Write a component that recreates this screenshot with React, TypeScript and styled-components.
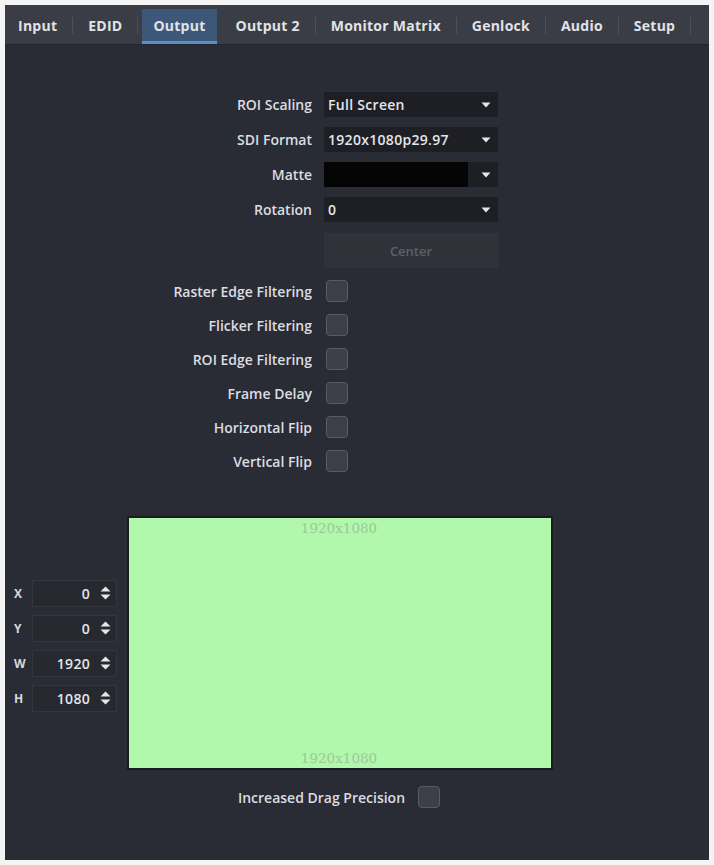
import React from "react";
import styled, { createGlobalStyle, css } from "styled-components";

const Global = createGlobalStyle`
  html, body { margin: 0; padding: 0; background: #f4f4f4; }
  body { font-family: "Open Sans", "Liberation Sans", sans-serif; }
  * { box-sizing: border-box; }
`;

const Frame = styled.div`
  width: 704px;
  height: 855px;
  margin: 5px 0 0 5px;
  background: #2a2c35;
  display: flex;
  flex-direction: column;
  overflow: hidden;
`;

const TabBar = styled.div`
  height: 40px;
  background: #3a3d46;
  display: flex;
  align-items: stretch;
  padding-left: 0;
  border-bottom: 1px solid #23252c;
  flex-shrink: 0;
`;

const Tab = styled.div<{ $active?: boolean; $first?: boolean }>`
  position: relative;
  display: flex;
  align-items: center;
  padding: 2px 15px 0 ${(p) => (p.$first ? "13px" : "15px")};
  font-size: 14px;
  letter-spacing: 0.25px;
  font-weight: 700;
  color: #e2e3e6;
  white-space: nowrap;
  ${(p) =>
    p.$active &&
    css`
      padding: 2px 11px 0;
      margin: 0 4px;
      &::before {
        content: "";
        position: absolute;
        left: 0;
        right: 0;
        top: 4px;
        bottom: 0;
        background: #3c5778;
        border-bottom: 3px solid #5b8fc7;
      }
    `}
  & > span { position: relative; }
`;

const Sep = styled.div`
  width: 1px;
  margin: 12px 0 10px;
  background: #4d5059;
`;

const Body = styled.div`
  flex: 1;
  display: flex;
  flex-direction: column;
  padding: 47px 0 0 7px;
`;

const Form = styled.div`
  display: grid;
  grid-template-columns: 300px 174px;
  column-gap: 12px;
  row-gap: 10px;
  align-items: center;
`;

const Label = styled.div`
  text-align: right;
  font-size: 14px;
  font-weight: 600;
  color: #dcdde0;
  white-space: nowrap;
`;

const Select = styled.div`
  height: 25px;
  background: #1e1f25;
  display: flex;
  align-items: center;
  padding-left: 4px;
  font-size: 14px;
  letter-spacing: 0.3px;
  font-weight: 600;
  color: #e4e5e8;
  position: relative;
`;

const SelectText = styled.span`
  flex: 1;
`;

const Caret = styled.span`
  width: 24px;
  display: flex;
  justify-content: center;
  align-items: center;
`;

const Swatch = styled.div`
  flex: 1;
  align-self: stretch;
  margin-left: -4px;
  background: #050505;
  margin-right: 6px;
`;

const CenterButton = styled.div`
  grid-column: 2;
  height: 35px;
  margin-top: 1px;
  background: #30323a;
  color: #5e6068;
  font-size: 13px;
  font-weight: 600;
  display: flex;
  align-items: center;
  justify-content: center;
`;

const Checks = styled.div`
  display: grid;
  grid-template-columns: 300px 22px;
  column-gap: 14px;
  row-gap: 12px;
  align-items: center;
  margin-top: 12px;
`;

const Box = styled.div`
  width: 22px;
  height: 22px;
  border-radius: 4px;
  background: #3d3f47;
  border: 1px solid #5a5c64;
`;

const CanvasSection = styled.div`
  display: grid;
  grid-template-columns: 105px 426px;
  justify-content: start;
  column-gap: 10px;
  align-items: center;
  margin-top: 44px;
`;

const Coords = styled.div`
  display: grid;
  grid-template-columns: 20px 85px;
  row-gap: 8px;
  align-items: center;
  margin-top: 5px;
`;

const CoordLabel = styled.div`
  font-size: 12px;
  font-weight: 700;
  color: #d8d9dc;
  padding-left: 2px;
`;

const NumInput = styled.div`
  height: 27px;
  background: #272930;
  border: 1px solid #34363e;
  display: flex;
  align-items: center;
  justify-content: flex-end;
  padding-right: 5px;
  font-size: 14px;
  letter-spacing: 0.3px;
  font-weight: 600;
  color: #e4e5e8;
  gap: 10px;
`;

const Canvas = styled.div`
  width: 426px;
  height: 254px;
  background: #b1f8ad;
  border: 2px solid #1b1c20;
  display: flex;
  flex-direction: column;
  justify-content: space-between;
  align-items: center;
  padding: 1px 0 1px;
`;

const CanvasText = styled.div`
  font-family: "DejaVu Serif", "Liberation Serif", serif;
  font-size: 13.5px;
  color: #9cc999;
  line-height: 18px;
  margin-left: -2px;
`;

const DragRow = styled.div`
  grid-column: 2;
  justify-self: center;
  display: flex;
  align-items: center;
  gap: 13px;
  margin-top: 16px;
  margin-left: -2px;
`;

const CaretIcon = () => (
  <svg width="10" height="6" viewBox="0 0 10 6">
    <path d="M0.5 0.5 L9.5 0.5 L5 5.5 Z" fill="#e6e6e8" />
  </svg>
);

const SpinIcon = () => (
  <svg width="11" height="14" viewBox="0 0 11 14">
    <path d="M5.5 0.5 L10.5 5.5 L0.5 5.5 Z" fill="#e6e6e8" />
    <path d="M5.5 13.5 L10.5 8.5 L0.5 8.5 Z" fill="#e6e6e8" />
  </svg>
);

const tabs = ["Input", "EDID", "Output", "Output 2", "Monitor Matrix", "Genlock", "Audio", "Setup"];
const checks = [
  "Raster Edge Filtering",
  "Flicker Filtering",
  "ROI Edge Filtering",
  "Frame Delay",
  "Horizontal Flip",
  "Vertical Flip",
];
const coords: [string, string][] = [
  ["X", "0"],
  ["Y", "0"],
  ["W", "1920"],
  ["H", "1080"],
];

export default function App() {
  return (
    <>
      <Global />
      <Frame>
        <TabBar>
          {tabs.map((t, i) => (
            <React.Fragment key={t}>
              <Tab $active={t === "Output"} $first={i === 0}>
                <span>{t}</span>
              </Tab>
              {t === "Output" ? null : <Sep />}
            </React.Fragment>
          ))}
        </TabBar>
        <Body>
          <Form>
            <Label>ROI Scaling</Label>
            <Select>
              <SelectText>Full Screen</SelectText>
              <Caret><CaretIcon /></Caret>
            </Select>
            <Label>SDI Format</Label>
            <Select>
              <SelectText>1920x1080p29.97</SelectText>
              <Caret><CaretIcon /></Caret>
            </Select>
            <Label>Matte</Label>
            <Select>
              <Swatch />
              <Caret><CaretIcon /></Caret>
            </Select>
            <Label>Rotation</Label>
            <Select>
              <SelectText>0</SelectText>
              <Caret><CaretIcon /></Caret>
            </Select>
            <CenterButton>Center</CenterButton>
          </Form>
          <Checks>
            {checks.map((c) => (
              <React.Fragment key={c}>
                <Label>{c}</Label>
                <Box />
              </React.Fragment>
            ))}
          </Checks>
          <CanvasSection>
            <Coords>
              {coords.map(([l, v]) => (
                <React.Fragment key={l}>
                  <CoordLabel>{l}</CoordLabel>
                  <NumInput>
                    {v}
                    <SpinIcon />
                  </NumInput>
                </React.Fragment>
              ))}
            </Coords>
            <Canvas>
              <CanvasText>1920x1080</CanvasText>
              <CanvasText>1920x1080</CanvasText>
            </Canvas>
            <DragRow>
              <Label>Increased Drag Precision</Label>
              <Box />
            </DragRow>
          </CanvasSection>
        </Body>
      </Frame>
    </>
  );
}
